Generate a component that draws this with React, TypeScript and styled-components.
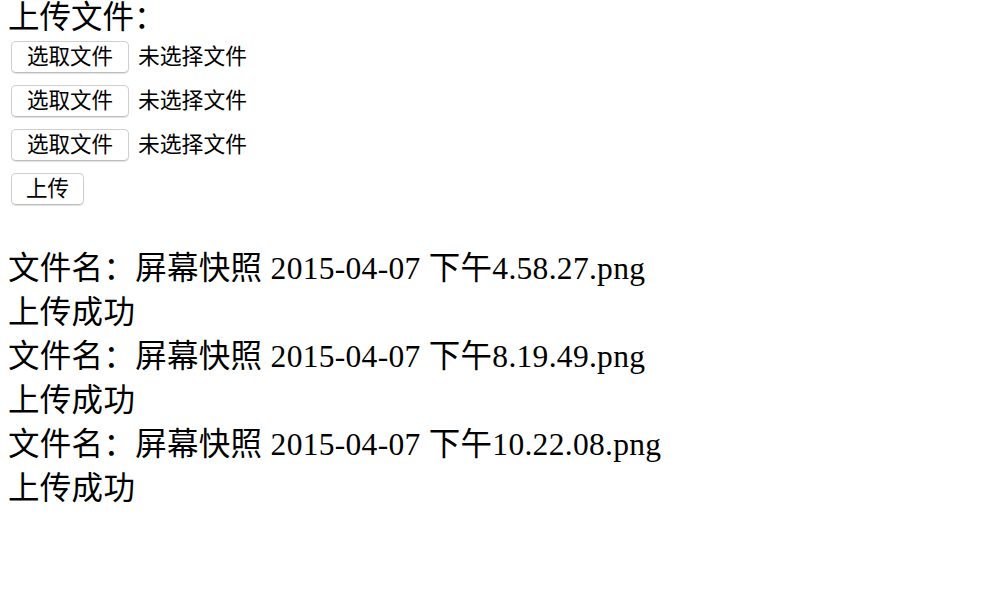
import styled, { createGlobalStyle } from "styled-components";

const GlobalStyle = createGlobalStyle`
  html, body {
    margin: 0;
    padding: 0;
    background: #ffffff;
  }
  body {
    padding: 0 8px;
    color: #000000;
    font-family: "Liberation Serif", "Noto Sans CJK SC", serif;
  }
`;

const Page = styled.div`
  display: flex;
  flex-direction: column;
`;

const Title = styled.div`
  font-size: 31.5px;
  line-height: 36px;
  height: 35px;
`;

const UploadForm = styled.form`
  display: flex;
  flex-direction: column;
  margin: 0;
`;

const FileRow = styled.div`
  display: flex;
  align-items: center;
  height: 44px;
`;

const FakeButton = styled.button<{ $wide?: boolean }>`
  box-sizing: border-box;
  height: 32px;
  margin: 0 0 0 3px;
  padding: 0 14px;
  min-width: ${({ $wide }) => ($wide ? "118px" : "73px")};
  background: #ffffff;
  border: 1px solid #cfcfcf;
  border-bottom-color: #bdbdbd;
  border-radius: 5px;
  box-shadow: 0 1px 1px rgba(0, 0, 0, 0.12);
  font-family: "Liberation Sans", "Noto Sans CJK SC", sans-serif;
  font-size: 21.5px;
  line-height: 30px;
  color: #000000;
  cursor: pointer;
`;

const FileLabel = styled.span`
  margin-left: 9px;
  font-family: "Liberation Sans", "Noto Sans CJK SC", sans-serif;
  font-size: 21.8px;
  line-height: 30px;
`;

const ResultList = styled.div`
  display: flex;
  flex-direction: column;
  margin-top: 36px;
`;

const ResultLine = styled.div`
  font-size: 31.5px;
  line-height: 44px;
  letter-spacing: 0.3px;
  white-space: nowrap;
`;

const files = [
  "屏幕快照 2015-04-07 下午4.58.27.png",
  "屏幕快照 2015-04-07 下午8.19.49.png",
  "屏幕快照 2015-04-07 下午10.22.08.png",
];

export default function App() {
  return (
    <Page>
      <GlobalStyle />
      <Title>上传文件：</Title>
      <UploadForm onSubmit={(e) => e.preventDefault()}>
        {[0, 1, 2].map((i) => (
          <FileRow key={i}>
            <FakeButton type="button" $wide>
              选取文件
            </FakeButton>
            <FileLabel>未选择文件</FileLabel>
          </FileRow>
        ))}
        <FileRow>
          <FakeButton type="submit">上传</FakeButton>
        </FileRow>
      </UploadForm>
      <ResultList>
        {files.map((name) => (
          <div key={name}>
            <ResultLine>文件名：{name}</ResultLine>
            <ResultLine>上传成功</ResultLine>
          </div>
        ))}
      </ResultList>
    </Page>
  );
}
